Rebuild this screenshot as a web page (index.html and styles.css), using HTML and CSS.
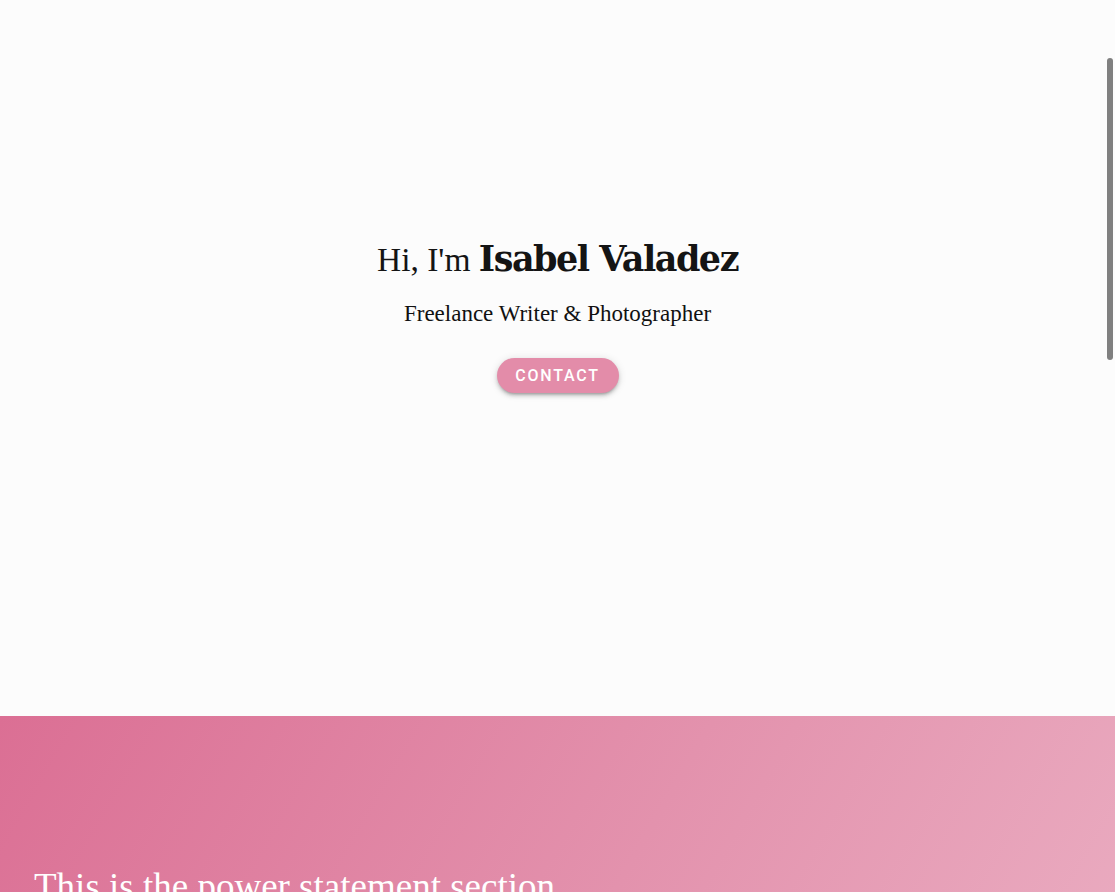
FILE: index.html
```html
<!DOCTYPE html>
<html lang="en">
<head>
<meta charset="utf-8">
<title>Isabel Valadez</title>
<link rel="stylesheet" href="styles.css">
</head>
<body>
<main class="page">
  <section class="hero">
    <h1 class="hero-title">Hi, I'm <strong class="hero-name">Isabel Valadez</strong></h1>
    <p class="hero-sub">Freelance Writer &amp; Photographer</p>
    <a class="btn-contact" href="#contact">Contact</a>
  </section>
  <section class="power">
    <h2 class="power-text">This is the power statement section</h2>
  </section>
</main>
<div class="scroll-thumb"></div>
</body>
</html>
```
FILE: styles.css
```css
html, body {
  margin: 0;
  padding: 0;
  overflow: hidden;
  background: #fcfcfc;
}
body {
  font-family: "Liberation Serif", "DejaVu Serif", serif;
  color: #111;
}
.page {
  display: flex;
  flex-direction: column;
}
.hero {
  height: 716px;
  box-sizing: border-box;
  padding-top: 229px;
  display: flex;
  flex-direction: column;
  align-items: center;
}
.hero-title {
  margin: 0;
  font-weight: 400;
  font-size: 33.5px;
  line-height: 60px;
  color: #141414;
}
.hero-name {
  font-family: "DejaVu Serif", serif;
  font-weight: 700;
  font-size: 35px;
  letter-spacing: -1.5px;
}
.hero-sub {
  margin: 10px 0 0;
  font-size: 23px;
  line-height: 28px;
  color: #111;
}
.btn-contact {
  margin-top: 30px;
  display: inline-flex;
  align-items: center;
  justify-content: center;
  width: 122px;
  height: 35px;
  border-radius: 18px;
  background: #e38ca9;
  color: #fff;
  text-decoration: none;
  text-transform: uppercase;
  font-family: Roboto, "Liberation Sans", sans-serif;
  font-weight: 500;
  font-size: 16px;
  letter-spacing: 1.8px;
  box-shadow: 0 3px 3px -2px rgba(0,0,0,0.25), 0 3px 4px 0 rgba(0,0,0,0.14), 0 1px 8px 0 rgba(0,0,0,0.12);
}
.power {
  height: 400px;
  background: linear-gradient(120deg, #db6f94 0%, #e392ad 50%, #ecb3c6 100%);
  padding: 147px 34px 0;
}
.power-text {
  margin: 0;
  font-weight: 400;
  font-size: 37px;
  line-height: 48px;
  color: #fff;
}
.scroll-thumb {
  position: fixed;
  top: 58px;
  right: 2px;
  width: 6px;
  height: 302px;
  border-radius: 3px;
  background: #808080;
}
```
